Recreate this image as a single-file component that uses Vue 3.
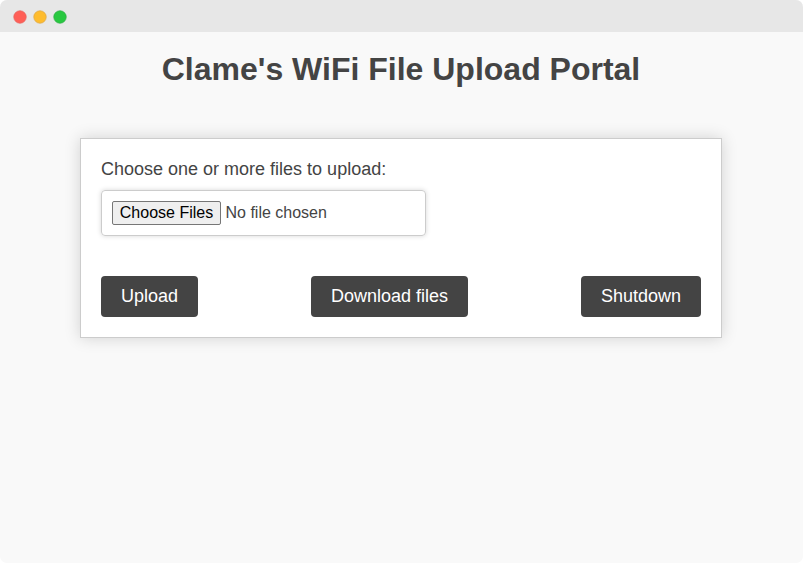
<script setup>
import { ref } from 'vue'

const title = "Clame's WiFi File Upload Portal"
const status = ref('No file chosen')
const actions = ['Upload', 'Download files', 'Shutdown']
const lights = [
  { name: 'close', x: 7 },
  { name: 'minimize', x: 27 },
  { name: 'maximize', x: 47 },
]
</script>

<template>
  <div class="window">
    <header class="titlebar">
      <svg width="54" height="14" viewBox="0 0 54 14">
        <circle v-for="light in lights" :key="light.name" :class="light.name" :cx="light.x" cy="7" r="6.2" />
      </svg>
    </header>
    <main class="page">
      <h1>{{ title }}</h1>
      <form class="card" @submit.prevent>
        <label class="prompt">Choose one or more files to upload:</label>
        <div class="file-field">
          <button type="button" class="choose">Choose Files</button>
          <span class="status">{{ status }}</span>
        </div>
        <div class="actions">
          <button v-for="action in actions" :key="action" type="button" class="action">{{ action }}</button>
        </div>
      </form>
    </main>
  </div>
</template>

<style>
body {
  background: #fff;
}
</style>

<style scoped>
.window {
  height: 563px;
  overflow: hidden;
  border-radius: 7px;
  background: #f9f9f9;
  color: #444;
  font-family: Arial, "Liberation Sans", sans-serif;
}
.titlebar {
  display: flex;
  align-items: center;
  box-sizing: border-box;
  height: 32px;
  padding: 2px 13px 0;
  background: #e7e7e7;
}
circle { stroke-width: 0.8; }
.close { fill: #ff5f57; stroke: #e9655f; }
.minimize { fill: #febc2e; stroke: #e0a948; }
.maximize { fill: #28c840; stroke: #2fb045; }
.page {
  display: flex;
  flex-direction: column;
  align-items: center;
}
h1 {
  margin: 19px 0 51px;
  padding-right: 1px;
  font-size: 32px;
  line-height: 36px;
}
.card {
  box-sizing: border-box;
  width: 642px;
  height: 200px;
  margin-right: 1px;
  padding: 20px;
  border: 1px solid #ccc;
  background: #fff;
  box-shadow: 0 0 15px rgba(0, 0, 0, 0.16);
}
.prompt {
  display: block;
  margin-bottom: 11px;
  font-size: 18px;
  line-height: 20px;
}
.file-field {
  display: flex;
  align-items: center;
  gap: 4.5px;
  box-sizing: border-box;
  width: 325px;
  height: 46px;
  padding: 0 10px;
  border: 1px solid #ccc;
  border-radius: 4px;
  font-size: 16px;
  box-shadow: 0 0 5px rgba(0, 0, 0, 0.16);
}
.choose {
  box-sizing: border-box;
  width: 109px;
  height: 24px;
  padding: 0;
  border: 1px solid #767676;
  border-radius: 2px;
  background: #efefef;
  color: #000;
  font: inherit;
}
.actions {
  display: flex;
  justify-content: space-between;
  margin-top: 40px;
}
.action {
  height: 41px;
  padding: 0 20px;
  border: none;
  border-radius: 4px;
  background: #444;
  color: #fff;
  font-family: inherit;
  font-size: 18px;
}
</style>
